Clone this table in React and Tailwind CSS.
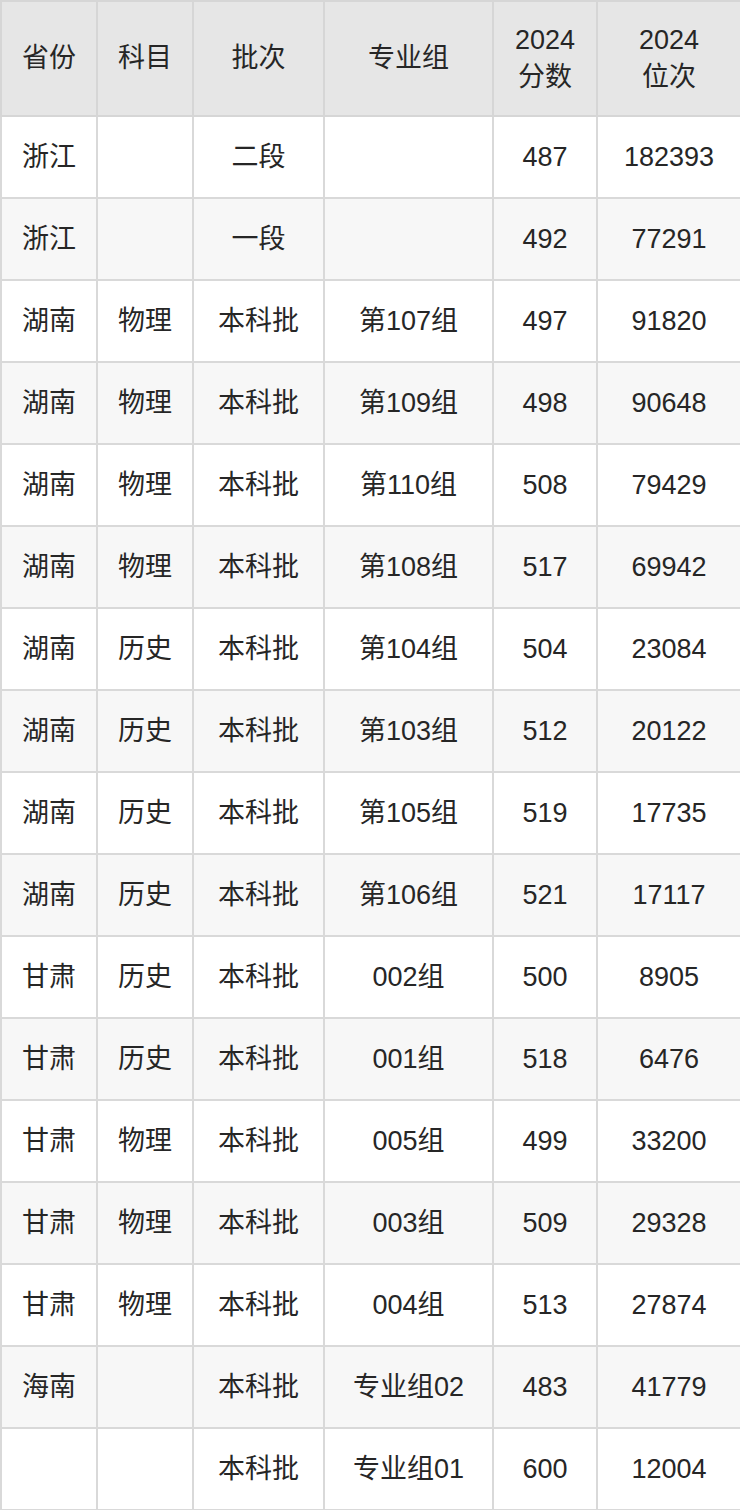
const rows = [
  ["浙江", "", "二段", "", "487", "182393"],
  ["浙江", "", "一段", "", "492", "77291"],
  ["湖南", "物理", "本科批", "第107组", "497", "91820"],
  ["湖南", "物理", "本科批", "第109组", "498", "90648"],
  ["湖南", "物理", "本科批", "第110组", "508", "79429"],
  ["湖南", "物理", "本科批", "第108组", "517", "69942"],
  ["湖南", "历史", "本科批", "第104组", "504", "23084"],
  ["湖南", "历史", "本科批", "第103组", "512", "20122"],
  ["湖南", "历史", "本科批", "第105组", "519", "17735"],
  ["湖南", "历史", "本科批", "第106组", "521", "17117"],
  ["甘肃", "历史", "本科批", "002组", "500", "8905"],
  ["甘肃", "历史", "本科批", "001组", "518", "6476"],
  ["甘肃", "物理", "本科批", "005组", "499", "33200"],
  ["甘肃", "物理", "本科批", "003组", "509", "29328"],
  ["甘肃", "物理", "本科批", "004组", "513", "27874"],
  ["海南", "", "本科批", "专业组02", "483", "41779"],
  ["", "", "本科批", "专业组01", "600", "12004"],
];

export default function App() {
  return (
    <div
      className="w-[740px] h-[1510px] bg-white text-[#262626] text-[27px]"
      style={{ fontFamily: '"Liberation Sans", "Noto Sans CJK SC", sans-serif' }}
    >
      <table className="w-[740px] table-fixed border-collapse border-2 border-[#d9d9d9]">
        <colgroup>
          <col className="w-[96px]" />
          <col className="w-[96px]" />
          <col className="w-[131px]" />
          <col className="w-[169px]" />
          <col className="w-[104px]" />
          <col className="w-[144px]" />
        </colgroup>
        <thead>
          <tr className="h-[115px] bg-[#e6e6e6]">
            <th className="border-2 border-[#d6d6d6] font-normal text-center">省份</th>
            <th className="border-2 border-[#d6d6d6] font-normal text-center">科目</th>
            <th className="border-2 border-[#d6d6d6] font-normal text-center">批次</th>
            <th className="border-2 border-[#d6d6d6] font-normal text-center">专业组</th>
            <th className="border-2 border-[#d6d6d6] font-normal text-center leading-[37px]">
              2024
              <br />
              分数
            </th>
            <th className="border-2 border-[#d6d6d6] font-normal text-center leading-[37px]">
              2024
              <br />
              位次
            </th>
          </tr>
        </thead>
        <tbody>
          {rows.map((r, i) => (
            <tr key={i} className={i % 2 === 0 ? "h-[82px] bg-white" : "h-[82px] bg-[#f7f7f7]"}>
              {r.map((c, j) => (
                <td key={j} className="border-2 border-[#d9d9d9] text-center p-0">
                  {c}
                </td>
              ))}
            </tr>
          ))}
        </tbody>
      </table>
    </div>
  );
}
